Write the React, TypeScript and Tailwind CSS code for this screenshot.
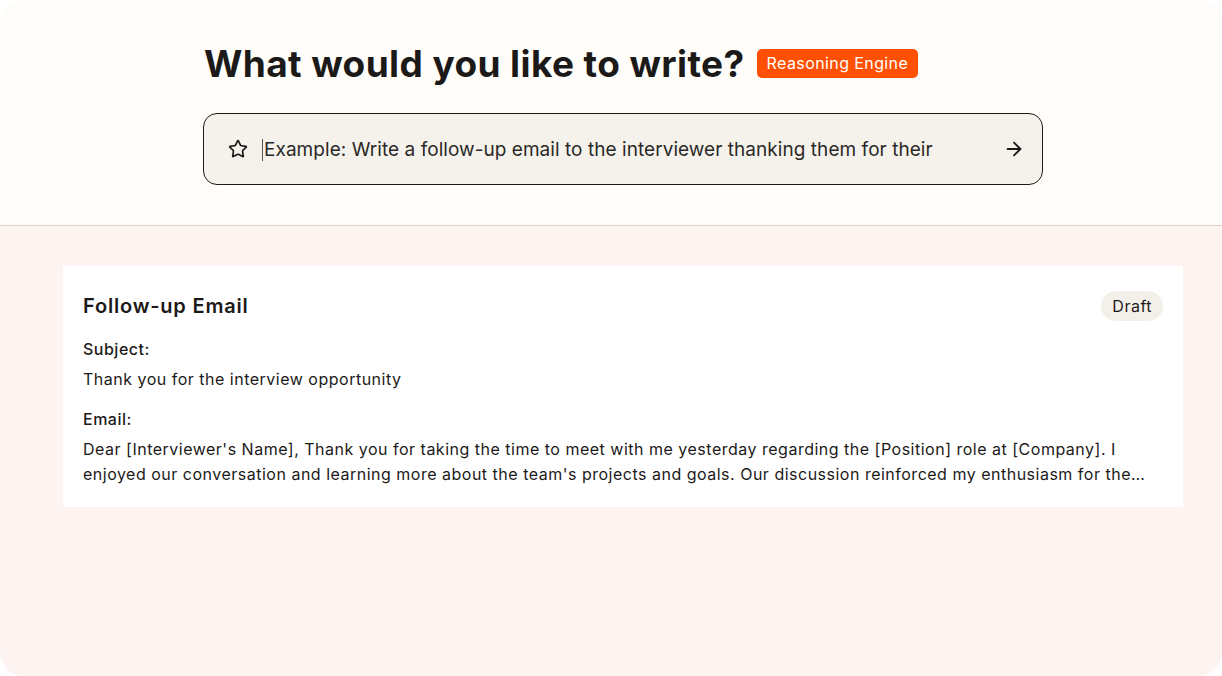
import { ArrowRight, Star } from "lucide-react";

export default function App() {
  return (
    <div className="w-[1222px] h-[676px] bg-white" style={{ fontFamily: "Inter, 'Liberation Sans', sans-serif" }}>
      <div className="w-full h-full rounded-[24px] overflow-hidden flex flex-col bg-[#fdf3f0]">
        {/* Prompt area */}
        <div className="bg-[#fffdf9] border-b border-[#d9d3cc] h-[226px] pl-[203px] pt-[44px]">
          <div className="flex items-center gap-[12px] pl-[1px]">
            <h1 className="text-[37px] leading-[40px] font-bold text-[#1c1a19] tracking-[0.4px]">
              What would you like to write?
            </h1>
            <span className="bg-[#ff4f00] text-white text-[16px] leading-[21px] tracking-[0.4px] px-[10px] py-[4px] rounded-[5px] mt-[-2px]">
              Reasoning Engine
            </span>
          </div>
          <div className="mt-[29px] w-[840px] h-[72px] rounded-[14px] border border-[#1c1a19] bg-[#f5f2ec] flex items-center pl-[24px] pr-[17px]">
            <Star className="w-[20px] h-[20px] text-[#1c1a19]" strokeWidth={2} />
            <div className="ml-[14px] flex-1 flex items-center pt-[1px]">
              <span className="w-[1px] h-[22px] bg-[#555] mr-[1px]" />
              <span className="text-[19px] leading-[28px] tracking-[0.05px] text-[#2b2927]">
                Example: Write a follow-up email to the interviewer thanking them for their
              </span>
            </div>
            <ArrowRight className="w-[22px] h-[22px] text-[#1c1a19]" strokeWidth={2} />
          </div>
        </div>

        {/* Result */}
        <div className="pl-[63px] pt-[40px]">
          <div className="w-[1120px] bg-white px-[20px] pt-[25px] pb-[20px]">
            <div className="flex items-center justify-between">
              <h2 className="text-[20px] leading-[28px] font-semibold tracking-[0.8px] text-[#1c1a19]">Follow-up Email</h2>
              <span className="bg-[#f3f0ea] text-[#1c1a19] text-[16px] leading-[20px] tracking-[0.5px] px-[11px] py-[5px] rounded-full">
                Draft
              </span>
            </div>
            <div className="mt-[16px] text-[16px] leading-[24px] font-medium tracking-[0.5px] text-[#1c1a19]">Subject:</div>
            <div className="mt-[6px] text-[16px] leading-[24px] tracking-[0.5px] text-[#1c1a19]">Thank you for the interview opportunity</div>
            <div className="mt-[16px] text-[16px] leading-[24px] font-medium tracking-[0.5px] text-[#1c1a19]">Email:</div>
            <p className="mt-[6px] text-[16px] leading-[25px] tracking-[0.5px] text-[#1c1a19] line-clamp-2">
              Dear [Interviewer's Name], Thank you for taking the time to meet with me yesterday regarding the [Position] role at [Company]. I enjoyed our conversation and learning more about the team's projects and goals. Our discussion reinforced my enthusiasm for the opportunity and my interest in contributing to the team.
            </p>
          </div>
        </div>
      </div>
    </div>
  );
}
